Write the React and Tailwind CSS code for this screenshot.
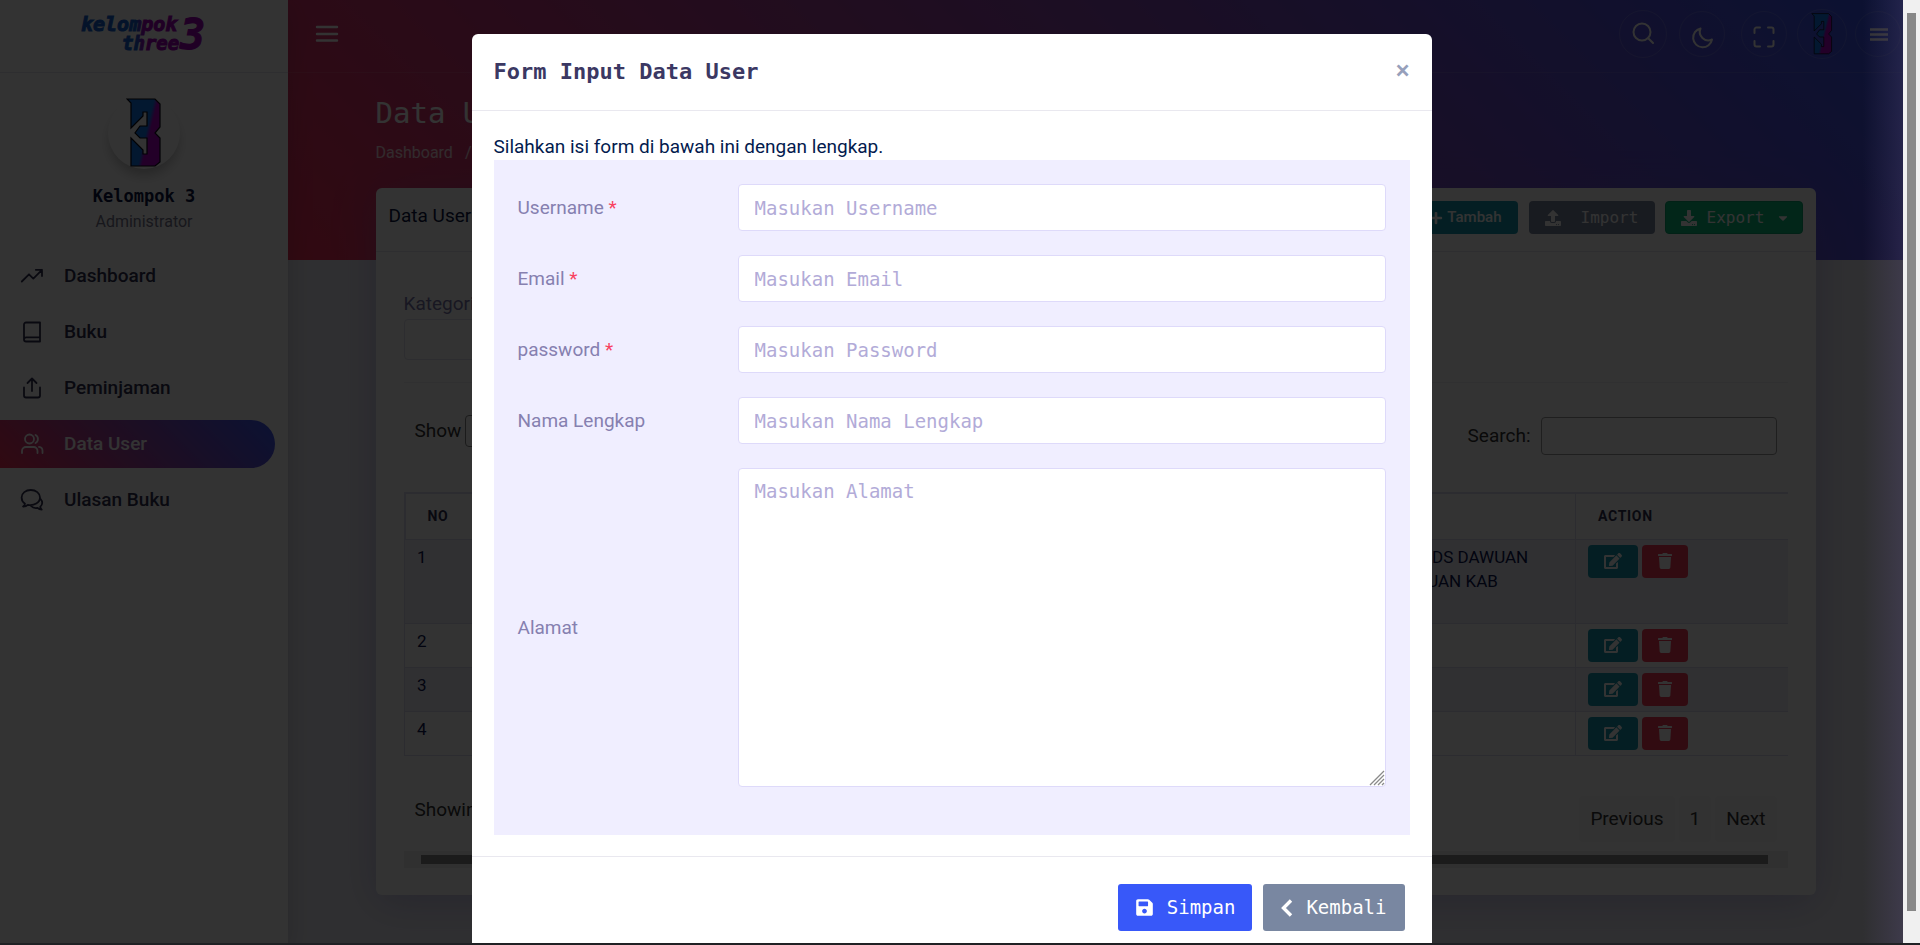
import React from "react";
import { FaPlus, FaSave, FaUpload, FaDownload, FaEdit, FaTrash, FaCaretDown } from "react-icons/fa";

const MONO = "font-['DejaVu_Sans_Mono',monospace]";

function LogoMark({ className, id }) {
  return (
    <svg viewBox="128 99 36 70" className={className} aria-hidden="true">
      <defs>
        <linearGradient id={id} x1="0" y1="0.2" x2="1" y2="0.7">
          <stop offset="0.58" stopColor="#1078f0" />
          <stop offset="0.68" stopColor="#b000c8" />
        </linearGradient>
      </defs>
      <path
        d="M129 100H157L162 105V128L157 134L162 139V163L157 167H133V139L145 151V155H149V139H142L137 134L142 127H149V113H145V117L133 129V104Z"
        fill={`url(#${id})`}
        stroke="#0a0a14"
        strokeWidth="1.2"
      />
    </svg>
  );
}

function BrandLogo() {
  return (
    <svg viewBox="0 0 130 50" className="h-[50px] w-[130px]" role="img" aria-label="kelompok three 3">
      <defs>
        <linearGradient id="brand" gradientUnits="userSpaceOnUse" x1="0" y1="0" x2="130" y2="0">
          <stop offset="0.44" stopColor="#1860d0" />
          <stop offset="0.5" stopColor="#a000b8" />
        </linearGradient>
      </defs>
      <g
        fill="url(#brand)"
        stroke="url(#brand)"
        strokeWidth="1"
        fontFamily="'DejaVu Sans Mono', monospace"
        fontWeight="700"
        fontStyle="italic"
      >
        <text x="2" y="22" fontSize="20">kelompok</text>
        <text x="43" y="41" fontSize="19">three</text>
        <text x="101" y="40" fontSize="42">3</text>
      </g>
    </svg>
  );
}

function LineIcon({ children }) {
  return (
    <svg
      viewBox="0 0 24 24"
      className="size-6 shrink-0"
      fill="none"
      stroke="currentColor"
      strokeWidth="1.8"
      strokeLinecap="round"
      strokeLinejoin="round"
      aria-hidden="true"
    >
      {children}
    </svg>
  );
}

const MENU = [
  {
    label: "Dashboard",
    icon: <path d="M1.8 17.5L9 10.3l4.3 4.3L22 5.8M15.8 5.8H22v6.2" />,
  },
  {
    label: "Buku",
    icon: <path d="M20 2.5H6a2 2 0 0 0-2 2v15a2 2 0 0 0 2 2h14zM4.200 18.600a2 2 0 0 1 1.800-1.300h14" />,
  },
  {
    label: "Peminjaman",
    icon: <path d="M12 15V2.5M7.5 7L12 2.5 16.5 7M4 11.5V19.5a2 2 0 0 0 2 2h12a2 2 0 0 0 2-2V11.5" />,
  },
  {
    label: "Data User",
    active: true,
    icon: (
      <path d="M9.500 11.500a4.500 4.500 0 1 0 0-9 4.500 4.500 0 0 0 0 9zM2 21v-2a4 4 0 0 1 4-4h7.500a4 4 0 0 1 4 4v2M15.500 3a4.500 4.500 0 0 1 0 8M19 14.800a4 4 0 0 1 3.500 4V21" />
    ),
  },
  {
    label: "Ulasan Buku",
    icon: (
      <path d="M5 15.800c-.1 1.200-.8 2-1.900 2.700 1.900.1 3.500-.5 4.700-1.700 6.200 1.200 12.200-2 12.200-7.300 0-4.300-4.100-7.500-9.200-7.500S1.600 5.200 1.600 9.500c0 2.600 1.300 4.800 3.400 6.300zM20.600 11c2.200 2.400 2.200 5.800-.4 7.900.1 1 .7 1.900 1.500 2.700-1.800 0-3.200-.7-4.200-1.700-2.500.4-5-.3-6.500-1.900" />
    ),
  },
];

function Sidebar() {
  return (
    <aside className="z-10 flex w-72 shrink-0 flex-col bg-white shadow-[0_8px_24px_rgba(40,40,60,0.2)]">
      <div className="flex h-[73px] items-center justify-center border-b border-[#e4e4ee] pb-1">
        <BrandLogo />
      </div>
      <div className="flex flex-col items-center pt-6">
        <div className="flex size-[72px] items-center justify-center rounded-full bg-white shadow-[0_8px_12px_-2px_rgba(0,0,0,0.25)]">
          <LogoMark className="h-[70px] w-9" id="mark-side" />
        </div>
        <p className={`mt-[15px] text-[17px] leading-6 font-bold text-[#0a1440] ${MONO}`}>Kelompok 3</p>
        <p className="mt-0.5 text-base leading-6 text-[#76758c]">Administrator</p>
      </div>
      <nav className="mt-[18px] flex flex-col gap-2 pr-[13px]">
        {MENU.map((item) => (
          <a
            key={item.label}
            href="#"
            className={
              item.active
                ? "flex h-12 items-center gap-5 rounded-r-full bg-[linear-gradient(45deg,#f33057,#3858f9)] pl-5 text-[19px] font-medium text-white"
                : "flex h-12 items-center gap-5 pl-5 text-[19px] font-medium text-[#31314f]"
            }
          >
            <LineIcon>{item.icon}</LineIcon>
            {item.label}
          </a>
        ))}
      </nav>
    </aside>
  );
}

const CIRCLE = "flex shrink-0 items-center justify-center rounded-full border border-white/15 text-white";

function TopBar() {
  return (
    <header className="flex h-[73px] items-center justify-between border-b border-white/10 pb-1 pl-[26px]">
      <button type="button" aria-label="Menu" className="text-white">
        <svg viewBox="0 0 26 26" className="size-[26px]" stroke="currentColor" strokeWidth="2.400" strokeLinecap="round">
          <path d="M3 6h20M3 13h20M3 19.500h20" />
        </svg>
      </button>
      <div className="flex items-center">
        <button type="button" aria-label="Cari" className={`size-12 ${CIRCLE}`}>
          <svg viewBox="0 0 24 24" className="size-6" fill="none" stroke="currentColor" strokeWidth="2" strokeLinecap="round">
            <circle cx="11" cy="10" r="8.500" />
            <path d="M17.200 16.200L22 21" />
          </svg>
        </button>
        <button type="button" aria-label="Mode gelap" className={`ml-3 size-[46px] pt-2 ${CIRCLE}`}>
          <svg viewBox="0 0 24 24" className="size-6" fill="none" stroke="currentColor" strokeWidth="2" strokeLinejoin="round">
            <path d="M10.500 2.500A9.500 9.500 0 1 0 22 13.500 8.500 8.500 0 0 1 10.500 2.500z" />
          </svg>
        </button>
        <button type="button" aria-label="Layar penuh" className={`ml-4 size-[46px] pt-[6px] ${CIRCLE}`}>
          <svg viewBox="0 0 24 24" className="size-6" fill="none" stroke="currentColor" strokeWidth="2" strokeLinecap="round">
            <path d="M8 2.500H4.500a2 2 0 0 0-2 2V8M16 2.500h3.500a2 2 0 0 1 2 2V8M8 21.500H4.500a2 2 0 0 1-2-2V16M16 21.500h3.500a2 2 0 0 0 2-2V16" />
          </svg>
        </button>
        <button type="button" aria-label="Profil" className={`ml-[10px] size-[50px] ${CIRCLE}`}>
          <LogoMark className="h-[42px] w-[22px]" id="mark-top" />
        </button>
        <button type="button" aria-label="Panel" className={`mr-0.5 ml-2 size-[46px] pl-0.5 ${CIRCLE}`}>
          <svg viewBox="0 0 18 13" className="h-[13px] w-[18px]" stroke="currentColor" strokeWidth="2.400">
            <path d="M0 1.500h18M0 6.500h18M0 11.500h18" />
          </svg>
        </button>
      </div>
    </header>
  );
}

const CELL = "border border-[#dddcf0] px-3 align-top";

const ROWS = [{ no: 1, tall: true }, { no: 2 }, { no: 3 }, { no: 4 }];

function UserTable() {
  return (
    <table className="w-full table-fixed border-collapse border-t-2 border-[#dddcf0] text-[17px] leading-6 text-[#0a1450]">
      <colgroup>
        <col className="w-[100px]" />
        <col />
        <col className="w-[233px]" />
        <col className="w-[212px]" />
      </colgroup>
      <thead>
        <tr className="h-[46px] text-left text-sm tracking-wider text-[#31314f] uppercase">
          <th className="border border-t-2 border-l-2 border-[#dddcf0] px-[22px] font-bold">No</th>
          <th className="border border-t-2 border-[#dddcf0] px-[22px] font-bold">Username</th>
          <th className="border border-t-2 border-[#dddcf0] px-[22px] font-bold">Alamat</th>
          <th className="border border-t-2 border-r-0 border-[#dddcf0] px-[22px] font-bold">Action</th>
        </tr>
      </thead>
      <tbody>
        {ROWS.map((row) => (
          <tr key={row.no} className={row.tall ? "h-[84px] bg-[#f0eff8]" : "h-11 odd:bg-[#f0eff8]"}>
            <td className={`${CELL} pt-[5px]`}>{row.no}</td>
            <td className={`${CELL} pt-[5px]`} />
            <td className={`${CELL} pt-[5px]`}>
              {row.tall && (
                <>
                  JL RAYA I DS DAWUAN
                  <br />
                  KEC DAWUAN KAB
                </>
              )}
            </td>
            <td className={`${CELL} border-r-0 pt-[5px]`}>
              <div className="flex gap-1">
                <button
                  type="button"
                  aria-label="Edit"
                  className="flex h-[33px] w-[50px] items-center justify-center rounded bg-[#1698af] text-white"
                >
                  <FaEdit className="size-[18px]" />
                </button>
                <button
                  type="button"
                  aria-label="Hapus"
                  className="flex h-[33px] w-[46px] items-center justify-center rounded bg-[#f23a55] text-white"
                >
                  <FaTrash className="size-4" />
                </button>
              </div>
            </td>
          </tr>
        ))}
      </tbody>
    </table>
  );
}

function DataCard() {
  return (
    <section className="rounded-md bg-white shadow-[0_8px_40px_rgba(110,100,190,0.35)]">
      <div className="flex h-16 items-start justify-between border-b border-[#e4e4ee] px-[13px] pt-[13px]">
        <h2 className="pt-[3px] text-[19px] leading-6 text-[#0a1440]">Data User</h2>
        <div className="flex text-white">
          <button
            type="button"
            className="flex h-[33px] items-center gap-1 rounded bg-[#1698af] px-4 text-[15px] font-medium"
          >
            <FaPlus className="size-[14px]" />
            Tambah
          </button>
          <button
            type="button"
            className={`ml-[11px] flex h-[33px] w-[126px] items-center gap-5 rounded bg-[#7987a1] pl-4 text-base ${MONO}`}
          >
            <FaUpload className="size-4" />
            Import
          </button>
          <button
            type="button"
            className={`ml-[10px] flex h-[33px] w-[138px] items-center rounded border border-[#0aa56f] bg-[#0dbd7f] pl-[15px] text-base ${MONO}`}
          >
            <FaDownload className="size-4" />
            <span className="ml-[10px]">Export</span>
            <FaCaretDown className="ml-3 size-[14px]" />
          </button>
        </div>
      </div>
      <div className="px-7 pt-10 pb-[27px]">
        <label htmlFor="kategori" className="block text-[19px] leading-6 text-[#7a76a8]">
          Kategori
        </label>
        <select
          id="kategori"
          className="mt-[3px] block h-[41px] w-1/2 appearance-none rounded border border-[#e1e0ee] bg-white"
        />
        <hr className="mt-[22px] border-[#f0f0f6]" />
        <div className="flex items-start justify-between px-[11px] pt-8 text-[19px] text-[#333]">
          <label className="flex items-center gap-1">
            Show
            <select className="h-8 w-16 appearance-none rounded border border-[#888] bg-white pl-2">
              <option>10</option>
            </select>
            entries
          </label>
          <label className="flex items-center gap-[10px] pt-[2px]">
            Search:
            <input type="search" className="h-[38px] w-[236px] rounded border border-[#999] bg-white" />
          </label>
        </div>
        <div className="mt-[37px]">
          <UserTable />
        </div>
        <div className="flex items-start justify-between px-[11px] pt-10 text-[19px] leading-7 text-[#333]">
          <p>Showing 1 to 4 of 4 entries</p>
          <div className="flex gap-1">
            <button type="button" className="h-[46px] rounded bg-[#f8f8f8] px-[11px]">Previous</button>
            <button type="button" className="h-[46px] rounded bg-[#f8f8f8] px-[11px]">1</button>
            <button type="button" className="h-[46px] rounded bg-[#f8f8f8] px-[11px]">Next</button>
          </div>
        </div>
        <div className="mt-[9px] bg-[#f0f0f0] py-1 pr-5 pl-[17px]">
          <div className="h-[9px] bg-[#878787]" />
        </div>
      </div>
    </section>
  );
}

const FIELDS = [
  { id: "username", label: "Username", required: true, placeholder: "Masukan Username", type: "text" },
  { id: "email", label: "Email", required: true, placeholder: "Masukan Email", type: "email" },
  { id: "password", label: "password", required: true, placeholder: "Masukan Password", type: "password" },
  { id: "nama", label: "Nama Lengkap", placeholder: "Masukan Nama Lengkap", type: "text" },
  { id: "alamat", label: "Alamat", placeholder: "Masukan Alamat", area: true },
];

const FIELD = "rounded-sm border border-[#dedafa] bg-white px-4 text-[19px] text-[#4d5875] placeholder:text-[#b2abd8]";

function ResizeGrip() {
  return (
    <svg
      viewBox="0 0 16 16"
      className="pointer-events-none absolute right-px bottom-px size-4"
      stroke="#8a8a8a"
      strokeWidth="1.300"
      aria-hidden="true"
    >
      <path d="M1 15L15 1M5 15L15 5M9 15L15 9M13 15L15 13" />
    </svg>
  );
}

function UserModal() {
  return (
    <div
      role="dialog"
      aria-modal="true"
      aria-labelledby="modal-title"
      className="mt-[34px] w-full max-w-[960px] shrink-0 self-start rounded-md bg-white"
    >
      <div className="flex h-[77px] items-start justify-between border-b border-[#e9e8ef] px-[22px]">
        <h1 id="modal-title" className={`pt-[22px] text-[22px] leading-8 font-bold text-[#3b3863] ${MONO}`}>
          Form Input Data User
        </h1>
        <button
          type="button"
          aria-label="Tutup"
          className="pt-[22px] text-[26px] leading-7 font-medium text-[#97a0bb]"
        >
          ×
        </button>
      </div>
      <form>
        <div className="px-[22px] pt-[23px] pb-[21px]">
          <p className="text-[19px] leading-[26px] text-[#031b4e]">Silahkan isi form di bawah ini dengan lengkap.</p>
          <div className="flex flex-col gap-6 bg-[#f0eeff] px-6 pt-6 pb-12">
            {FIELDS.map((f) => (
              <div key={f.id} className="flex items-center">
                <label htmlFor={f.id} className="w-[220px] shrink-0 text-[19px] leading-7 text-[#8680b0]">
                  {f.label} {f.required && <span className="text-[#f8425f]">*</span>}
                </label>
                {f.area ? (
                  <div className="relative flex min-w-0 flex-1">
                    <textarea
                      id={f.id}
                      placeholder={f.placeholder}
                      className={`h-[319px] w-full resize-none pt-2 leading-7 ${FIELD} ${MONO}`}
                    />
                    <ResizeGrip />
                  </div>
                ) : (
                  <input
                    id={f.id}
                    type={f.type}
                    placeholder={f.placeholder}
                    className={`h-[47px] min-w-0 flex-1 ${FIELD} ${MONO}`}
                  />
                )}
              </div>
            ))}
          </div>
        </div>
        <div
          className={`flex justify-end gap-[11px] border-t border-[#e9e8ef] px-[27px] pt-[27px] pb-8 text-[19px] text-white ${MONO}`}
        >
          <button type="submit" className="flex h-[47px] items-center gap-[13px] rounded-[3px] bg-[#3858f9] px-[17px]">
            <FaSave className="size-[19px]" />
            Simpan
          </button>
          <button type="button" className="flex h-[47px] items-center gap-[13px] rounded-[3px] bg-[#7987a1] px-[18px]">
            <svg viewBox="0 0 12 18" className="h-[18px] w-3" fill="none" stroke="currentColor" strokeWidth="3.400" aria-hidden="true">
              <path d="M10 1.500L2.500 9L10 16.500" />
            </svg>
            Kembali
          </button>
        </div>
      </form>
    </div>
  );
}

export default function App() {
  return (
    <div className="flex h-screen flex-col overflow-hidden bg-[#202124] font-[Roboto,sans-serif]">
      <div className="flex min-h-0 flex-1">
        <div className="relative flex min-w-0 flex-1 overflow-hidden">
          <Sidebar />
          <main className="min-w-0 flex-1 bg-[#ececf4] bg-[linear-gradient(45deg,#f33057,#3858f9)] bg-[length:100%_260px] bg-no-repeat">
            <TopBar />
            <div className="mx-auto max-w-[1440px]">
              <h1 className={`pt-5 text-[29px] leading-10 text-white ${MONO}`}>Data User</h1>
              <p className="mt-2 mb-[23px] flex gap-3 text-base leading-6 text-white/80">
                <a href="#">Dashboard</a>
                <span>/</span>
                <span>Data User</span>
              </p>
              <DataCard />
            </div>
          </main>
          <div className="absolute inset-0 z-20 flex justify-center overflow-hidden bg-black/80">
            <UserModal />
          </div>
          <div className="pointer-events-none absolute inset-y-0 right-0 z-30 w-10 bg-linear-to-r from-transparent to-[#685a96]/25" />
        </div>
        <div className="w-[17px] bg-[#f0f0f0] px-1 pt-[13px] pb-8">
          <div className="h-full bg-[#878787]" />
        </div>
      </div>
      <div className="h-0.5" />
    </div>
  );
}
